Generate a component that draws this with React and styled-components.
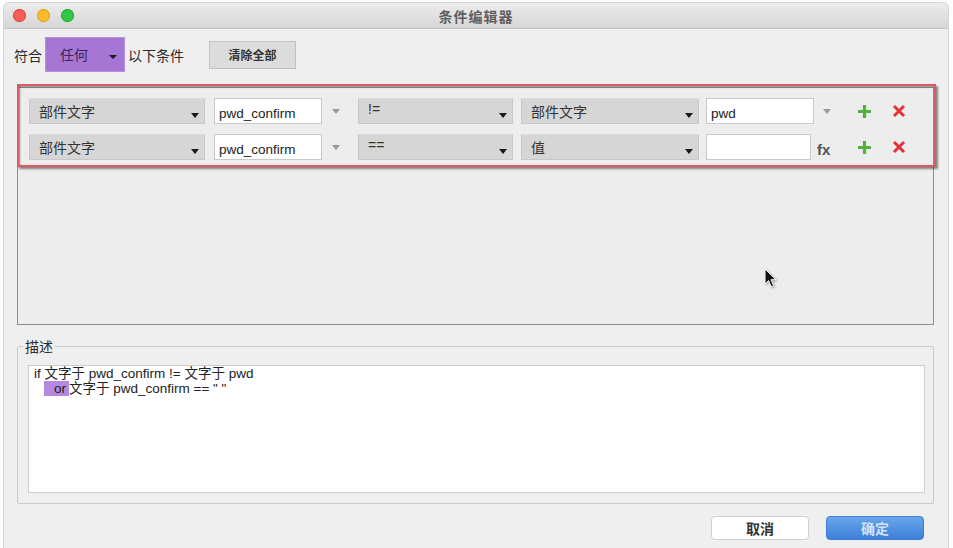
import React from 'react';
import styled, { createGlobalStyle } from 'styled-components';

const GlobalStyle = createGlobalStyle`
  html, body {
    margin: 0;
    padding: 0;
    background: #fdfdfd;
    overflow: hidden;
  }
  body {
    font-family: "Liberation Sans", "Noto Sans CJK SC", sans-serif;
    color: #2b2b2b;
  }
`;

const rules = [
  { field: '部件文字', name: 'pwd_confirm', op: '!=', kind: '部件文字', value: 'pwd', fx: false },
  { field: '部件文字', name: 'pwd_confirm', op: '==', kind: '值', value: '', fx: true },
];

export default function App() {
  return (
    <>
      <GlobalStyle />
      <Window>
        <TitleBar>
          <Lights>
            <Light color="#fc5d58" edge="#e2463f" />
            <Light color="#fdbb2e" edge="#dea123" />
            <Light color="#33c748" edge="#27aa35" />
          </Lights>
          <Title>条件编辑器</Title>
        </TitleBar>

        <Toolbar>
          <Label>符合</Label>
          <MatchSelect>
            任何
            <SmallCaret />
          </MatchSelect>
          <Label>以下条件</Label>
          <ClearButton>清除全部</ClearButton>
        </Toolbar>

        <RulePanel>
          <Highlight />
          {rules.map((r, i) => (
            <RuleRow key={i}>
              <Select width={176}>
                {r.field}
                <Caret />
              </Select>
              <Input>{r.name}</Input>
              <Slot>
                <GrayCaret />
              </Slot>
              <Select width={155}>
                {r.op}
                <Caret />
              </Select>
              <Select width={178}>
                {r.kind}
                <Caret />
              </Select>
              <Input narrow={r.fx}>{r.value}</Input>
              <Slot>{r.fx ? <Fx>fx</Fx> : <GrayCaret />}</Slot>
              <IconCell>
                <svg width="15" height="15" viewBox="0 0 15 15">
                  <path d="M7.5 1v13M1 7.5h13" stroke="#56b13a" strokeWidth="3.2" />
                </svg>
              </IconCell>
              <IconCell>
                <svg width="14" height="14" viewBox="0 0 14 14">
                  <path d="M2 2l10 10M12 2L2 12" stroke="#e2353b" strokeWidth="3" />
                </svg>
              </IconCell>
            </RuleRow>
          ))}
          <Pointer width="14" height="21" viewBox="0 0 14 21">
            <path
              d="M1 1v15l3.6-3.4 2.6 6.1 2.4-1-2.6-6h5z"
              fill="#111"
              stroke="#fff"
              strokeWidth="1"
              strokeLinejoin="round"
            />
          </Pointer>
        </RulePanel>

        <Description>
          <Legend>描述</Legend>
          <DescBox>
            <Line>if 文字于 pwd_confirm != 文字于 pwd</Line>
            <Line indent>
              <OrMark>or</OrMark>文字于 pwd_confirm == " "
            </Line>
          </DescBox>
        </Description>

        <Footer>
          <Button>取消</Button>
          <Button primary>确定</Button>
        </Footer>
      </Window>
    </>
  );
}

const Window = styled.div`
  margin: 3px 0 0 4px;
  width: 944px;
  height: 560px;
  background: #efefef;
  border-radius: 5px 5px 0 0;
  box-shadow: 0 0 0 1px #d6d6d6;
  display: flex;
  flex-direction: column;
`;

const TitleBar = styled.div`
  height: 25px;
  flex: none;
  position: relative;
  display: flex;
  align-items: center;
  justify-content: center;
  background: linear-gradient(#ececec, #d6d6d6);
  border-bottom: 1px solid #c2c2c2;
  border-radius: 5px 5px 0 0;
`;

const Lights = styled.div`
  position: absolute;
  left: 9px;
  top: 6px;
  display: flex;
  gap: 11px;
`;

const Light = styled.span`
  width: 13px;
  height: 13px;
  border-radius: 50%;
  background: ${(p) => p.color};
  box-shadow: inset 0 0 0 1px ${(p) => p.edge};
`;

const Title = styled.div`
  font-size: 14px;
  font-weight: bold;
  color: #5e5e5e;
  letter-spacing: 1px;
`;

const Toolbar = styled.div`
  display: flex;
  align-items: center;
  height: 35px;
  margin-top: 8px;
  padding-left: 10px;
`;

const Label = styled.span`
  font-size: 14px;
  color: #2b2b2b;
`;

const MatchSelect = styled.div`
  position: relative;
  box-sizing: border-box;
  width: 80px;
  height: 35px;
  margin: 0 3px;
  padding: 6px 0 0 14px;
  font-size: 14px;
  color: #3a2459;
  background: #a576d4;
  border: 1px solid #b690e0;
`;

const SmallCaret = styled.span`
  position: absolute;
  right: 7px;
  top: 17px;
  width: 0;
  height: 0;
  border-left: 4px solid transparent;
  border-right: 4px solid transparent;
  border-top: 4px solid #1a1a1a;
`;

const ClearButton = styled.div`
  box-sizing: border-box;
  width: 87px;
  height: 28px;
  margin-left: 25px;
  display: flex;
  align-items: center;
  justify-content: center;
  font-size: 12px;
  font-weight: bold;
  color: #333;
  background: #dcdcdc;
  border: 1px solid #c2c2c2;
`;

const RulePanel = styled.div`
  position: relative;
  box-sizing: border-box;
  height: 238px;
  margin: 15px 14px 0 13px;
  padding: 10px 0 0 11px;
  border: 1px solid #8e8e8e;
  background: #ededed;
  display: flex;
  flex-direction: column;
  gap: 10px;
`;

const Highlight = styled.div`
  position: absolute;
  left: -1px;
  right: -3px;
  top: -4px;
  height: 79px;
  border: 2px solid #dc5a64;
  box-shadow: 2px 2px 2px rgba(0, 0, 0, 0.45), inset 1px 1px 2px rgba(0, 0, 0, 0.45);
  pointer-events: none;
`;

const RuleRow = styled.div`
  display: grid;
  grid-template-columns: 185px 108px 36px 163px 185px 107px 36px 35px 30px;
  align-items: center;
  height: 26px;
`;

const Select = styled.div`
  position: relative;
  box-sizing: border-box;
  width: ${(p) => p.width}px;
  height: 26px;
  padding: 2px 0 0 9px;
  font-size: 14px;
  color: #333;
  background: #d6d6d6;
  border: 1px solid #c8c8c8;
  border-top-color: #dcdcdc;
`;

const Caret = styled.span`
  position: absolute;
  right: 5px;
  top: 14px;
  width: 0;
  height: 0;
  border-left: 4.5px solid transparent;
  border-right: 4.5px solid transparent;
  border-top: 5px solid #1a1a1a;
`;

const Input = styled.div`
  box-sizing: border-box;
  width: ${(p) => (p.narrow ? 105 : 108)}px;
  height: 26px;
  padding: 7px 0 0 4px;
  font-size: 13.5px;
  color: #222;
  background: #fff;
  border: 1px solid #c9c9c9;
`;

const Slot = styled.div`
  display: flex;
  align-items: center;
  padding-left: 10px;
`;

const GrayCaret = styled.span`
  width: 0;
  height: 0;
  border-left: 4.5px solid transparent;
  border-right: 4.5px solid transparent;
  border-top: 5px solid #9a9a9a;
`;

const Fx = styled.span`
  margin-left: -6px;
  margin-top: 4px;
  font-size: 15px;
  font-weight: bold;
  color: #555;
`;

const IconCell = styled.div`
  display: flex;
  align-items: center;
  padding-left: 8px;
`;

const Pointer = styled.svg`
  position: absolute;
  left: 746px;
  top: 180px;
  filter: drop-shadow(1px 1px 1px rgba(0, 0, 0, 0.35));
`;

const Description = styled.fieldset`
  box-sizing: border-box;
  height: 168px;
  margin: 11px 14px 0 13px;
  padding: 9px 8px 9px 10px;
  border: 1px solid #c9c9c9;
  border-radius: 2px;
  min-width: 0;
`;

const Legend = styled.legend`
  margin-left: -5px;
  padding: 0 2px;
  font-size: 14px;
  color: #2b2b2b;
`;

const DescBox = styled.div`
  box-sizing: border-box;
  height: 128px;
  padding: 0 5px;
  background: #fff;
  border: 1px solid #cdcdcd;
  font-size: 13.5px;
  line-height: 15px;
  color: #222;
`;

const Line = styled.div`
  padding-left: ${(p) => (p.indent ? 10 : 0)}px;
  white-space: pre;
`;

const OrMark = styled.span`
  display: inline-block;
  padding: 0 3px 0 10px;
  background: #b788e0;
`;

const Footer = styled.div`
  display: flex;
  justify-content: flex-end;
  gap: 17px;
  padding: 12px 24px 0 0;
`;

const Button = styled.div`
  box-sizing: border-box;
  width: 98px;
  height: 24px;
  display: flex;
  align-items: center;
  justify-content: center;
  font-size: 14px;
  font-weight: bold;
  border-radius: 4px;
  color: ${(p) => (p.primary ? '#d4e4f8' : '#333')};
  background: ${(p) => (p.primary ? 'linear-gradient(#6aa7ea, #3b7fd8)' : '#fff')};
  border: 1px solid ${(p) => (p.primary ? '#3f7fd0' : '#cfcfcf')};
`;
